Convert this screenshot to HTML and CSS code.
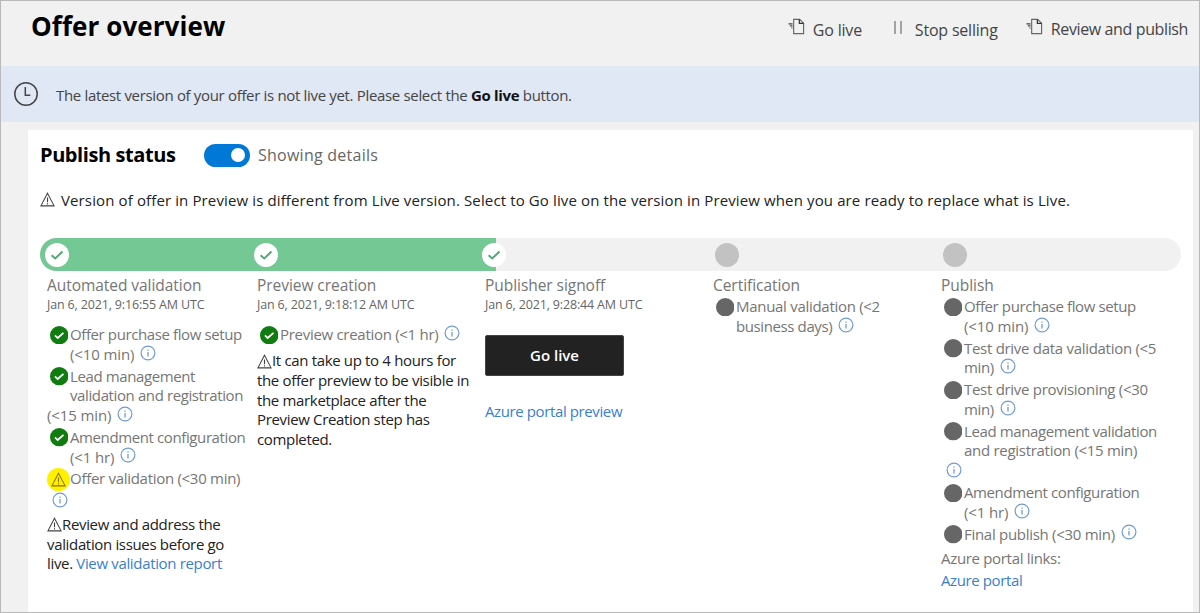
FILE: index.html
```html
<!DOCTYPE html>
<html lang="en">
<head>
<meta charset="utf-8">
<title>Offer overview</title>
<link rel="stylesheet" href="styles.css">
</head>
<body>
<svg class="defs" aria-hidden="true">
  <symbol id="ok" viewBox="0 0 18 18"><circle cx="9" cy="9" r="9" fill="#107c10"/><path d="M4.8 9.1l2.7 2.6 5.6-5" fill="none" stroke="#fff" stroke-width="1.7"/></symbol>
  <symbol id="dot" viewBox="0 0 18 18"><circle cx="9" cy="9" r="9" fill="#666"/></symbol>
  <symbol id="info" viewBox="0 0 16 16"><circle cx="8" cy="8" r="6.9" fill="none" stroke="#6f9bd8" stroke-width="1.2"/><path d="M8 7v4.6M8 4.4v1.4" stroke="#6f9bd8" stroke-width="1.3"/></symbol>
  <symbol id="warn" viewBox="0 0 16 16"><path d="M8 1.3L15 14.8H1z" fill="none" stroke="currentColor" stroke-width="1.1"/><path d="M8 5.8v5M8 12v1.4" stroke="currentColor" stroke-width="1.2"/></symbol>
  <symbol id="doc" viewBox="0 0 18 18"><path d="M6 1.5h6.3l4.2 4v11H6z" fill="none" stroke="#666" stroke-width="1.2"/><path d="M12 1.5v4.2h4.4" fill="none" stroke="#333" stroke-width="1.3"/><path d="M.5 6.2H4.8M2 8.4h2.8M3.5 10.6h1.3" stroke="#444" stroke-width="1.2"/></symbol>
  <symbol id="step" viewBox="0 0 24 24"><circle cx="12" cy="12" r="12" fill="#fff"/><path d="M6.6 12.2l3.6 3.3 7.3-7" fill="none" stroke="#52a975" stroke-width="2"/></symbol>
</svg>
<div class="page">
  <header class="header">
    <h1 class="title">Offer overview</h1>
    <nav class="actions">
      <a class="action golive"><svg class="doc"><use href="#doc"/></svg><span>Go live</span></a>
      <a class="action stop"><i class="pause"></i><span>Stop selling</span></a>
      <a class="action review"><svg class="doc"><use href="#doc"/></svg><span>Review and publish</span></a>
    </nav>
  </header>
  <div class="banner">
    <svg class="clock" viewBox="0 0 24 24"><circle cx="12" cy="12" r="11.2" fill="none" stroke="#444" stroke-width="1.5"/><path d="M11.3 5v8.2h5" fill="none" stroke="#444" stroke-width="1.5"/></svg>
    <p class="banner-text">The latest version of your offer is not live yet. Please select the <b>Go live</b> button.</p>
  </div>
  <main class="card">
    <div class="status">
      <h2 class="subtitle">Publish status</h2>
      <span class="toggle"><i class="knob"></i></span>
      <span class="toggle-label">Showing details</span>
    </div>
    <div class="notice"><svg class="warn"><use href="#warn"/></svg><span>Version of offer in Preview is different from Live version. Select to Go live on the version in Preview when you are ready to replace what is Live.</span></div>
    <div class="track">
      <div class="cell done"><svg class="step"><use href="#step"/></svg></div>
      <div class="cell done"><svg class="step"><use href="#step"/></svg></div>
      <div class="cell half"><svg class="step"><use href="#step"/></svg></div>
      <div class="cell"><i class="pending"></i></div>
      <div class="cell"><i class="pending"></i></div>
    </div>
    <div class="columns">
      <section class="col">
        <h3 class="name">Automated validation</h3>
        <p class="date">Jan 6, 2021, 9:16:55 AM UTC</p>
        <div class="item"><div class="line"><svg class="mark"><use href="#ok"/></svg><span>Offer purchase flow setup</span></div><div class="line in short"><span>(&lt;10 min)</span><svg class="info"><use href="#info"/></svg></div></div>
        <div class="item"><div class="line"><svg class="mark"><use href="#ok"/></svg><span>Lead management</span></div><div class="line in"><span>validation and registration</span></div><div class="line short"><span>(&lt;15 min)</span><svg class="info"><use href="#info"/></svg></div></div>
        <div class="item"><div class="line"><svg class="mark"><use href="#ok"/></svg><span>Amendment configuration</span></div><div class="line in short"><span>(&lt;1 hr)</span><svg class="info"><use href="#info"/></svg></div></div>
        <div class="item"><div class="line medium"><span class="alert"><svg class="warn"><use href="#warn"/></svg></span><span>Offer validation (&lt;30 min)</span></div><div class="line alone low"><svg class="info"><use href="#info"/></svg></div></div>
        <div class="note"><div class="line"><svg class="warn"><use href="#warn"/></svg><span>Review and address the</span></div><div class="line">validation issues before go</div><div class="line">live.&nbsp;<a class="link">View validation report</a></div></div>
      </section>
      <section class="col">
        <h3 class="name">Preview creation</h3>
        <p class="date">Jan 6, 2021, 9:18:12 AM UTC</p>
        <div class="item"><div class="line medium"><svg class="mark"><use href="#ok"/></svg><span>Preview creation (&lt;1 hr)</span><svg class="info"><use href="#info"/></svg></div></div>
        <div class="note preview-note"><div class="line"><svg class="warn"><use href="#warn"/></svg><span>It can take up to 4 hours for</span></div><div class="line">the offer preview to be visible in</div><div class="line">the marketplace after the</div><div class="line">Preview Creation step has</div><div class="line">completed.</div></div>
      </section>
      <section class="col">
        <h3 class="name">Publisher signoff</h3>
        <p class="date">Jan 6, 2021, 9:28:44 AM UTC</p>
        <button class="button">Go live</button>
        <div class="line"><a class="link">Azure portal preview</a></div>
      </section>
      <section class="col">
        <h3 class="name">Certification</h3>
        <div class="item"><div class="line medium"><svg class="mark"><use href="#dot"/></svg><span>Manual validation (&lt;2</span></div><div class="line in"><span>business days)</span><svg class="info"><use href="#info"/></svg></div></div>
      </section>
      <section class="col">
        <h3 class="name">Publish</h3>
        <div class="item"><div class="line"><svg class="mark"><use href="#dot"/></svg><span>Offer purchase flow setup</span></div><div class="line in short"><span>(&lt;10 min)</span><svg class="info"><use href="#info"/></svg></div></div>
        <div class="item"><div class="line medium"><svg class="mark"><use href="#dot"/></svg><span>Test drive data validation (&lt;5</span></div><div class="line in"><span>min)</span><svg class="info"><use href="#info"/></svg></div></div>
        <div class="item"><div class="line medium"><svg class="mark"><use href="#dot"/></svg><span>Test drive provisioning (&lt;30</span></div><div class="line in"><span>min)</span><svg class="info"><use href="#info"/></svg></div></div>
        <div class="item"><div class="line"><svg class="mark"><use href="#dot"/></svg><span>Lead management validation</span></div><div class="line in medium"><span>and registration (&lt;15 min)</span></div><div class="line alone"><svg class="info"><use href="#info"/></svg></div></div>
        <div class="item"><div class="line"><svg class="mark"><use href="#dot"/></svg><span>Amendment configuration</span></div><div class="line in short"><span>(&lt;1 hr)</span><svg class="info"><use href="#info"/></svg></div></div>
        <div class="item"><div class="line medium"><svg class="mark"><use href="#dot"/></svg><span>Final publish (&lt;30 min)</span><svg class="info"><use href="#info"/></svg></div></div>
        <div class="line links">Azure portal links:</div>
        <div class="line"><a class="link">Azure portal</a></div>
      </section>
    </div>
  </main>
</div>
</body>
</html>
```
FILE: styles.css
```css
* { box-sizing: border-box; margin: 0; padding: 0; }
body { font-family: "Open Sans", "Noto Sans", sans-serif; font-size: 15px; color: #222; background: #f1f1f1; }
svg { flex: none; }
.defs { display: none; }
.page { width: 1200px; height: 613px; border: 1px solid #b9b9b9; overflow: hidden; background: #f1f1f1; }

.header { height: 65px; display: flex; justify-content: space-between; padding: 0 11px 0 30px; }
.title { font-size: 26px; line-height: 36px; font-weight: 700; letter-spacing: 0.08px; color: #000; padding-top: 7px; }
.actions { display: flex; font-size: 16px; line-height: 22px; color: #444; white-space: nowrap; letter-spacing: -0.2px; }
.action { display: flex; }
.doc { width: 17px; height: 17px; margin-top: 17px; }
.action span { padding-top: 17px; }
.golive span { margin-left: 8px; width: 81px; }
.stop span { margin-left: 13px; width: 111px; }
.golive span, .stop span { padding-top: 18px; }
.review span { margin-left: 8px; letter-spacing: -0.38px; }
.pause { width: 8px; height: 13px; margin-top: 20px; border: solid #a3a3a3; border-width: 0 2px; }

.banner { height: 56px; background: #e0e7f5; display: flex; align-items: center; padding: 0 0 0 13px; }
.clock { width: 24px; height: 24px; }
.banner-text { margin-left: 18px; white-space: nowrap; color: #444; letter-spacing: -0.33px; padding-top: 2px; }
.banner-text b { color: #111; }

.card { width: 1165px; height: 482px; margin: 8px 0 0 27px; background: #fff; padding: 13px 12px 0; }
.status { display: flex; align-items: center; height: 24px; white-space: nowrap; }
.subtitle { font-size: 20px; line-height: 24px; width: 164px; color: #000; letter-spacing: -0.42px; }
.toggle { width: 46px; height: 23px; border-radius: 12px; background: #0078d7; display: flex; justify-content: flex-end; align-items: center; padding-right: 5px; }
.knob { width: 14px; height: 14px; border-radius: 50%; background: #fff; }
.toggle-label { font-size: 16px; margin-left: 8px; color: #666; letter-spacing: 0.25px; }
.notice { display: flex; align-items: center; height: 22px; margin: 22px 0 27px; white-space: nowrap; letter-spacing: 0.125px; }
.notice span { margin-left: 6px; }
.warn { width: 15px; height: 15px; }
.notice .warn { margin-top: -1px; }
.notice .warn, .note .warn { color: #444; }

.track { height: 33px; width: 1141px; border-radius: 17px; background: #f1f1f1; overflow: hidden; display: grid; grid-template-columns: 210px 228px 228px 228px 1fr; }
.cell { display: flex; align-items: center; padding-left: 5px; }
.cell + .cell { padding-left: 4px; }
.done { background: #74c893; }
.half { background: linear-gradient(90deg, #74c893 18px, #f1f1f1 18px); }
.step { width: 24px; height: 24px; }
.pending { width: 24px; height: 24px; border-radius: 50%; background: #c2c2c2; margin-left: 5px; }

.columns { display: grid; grid-template-columns: 210px 228px 228px 228px 1fr; margin: 3px 0 0 7px; color: #767676; white-space: nowrap; letter-spacing: -0.39px; }
.name { font-size: 15.5px; line-height: 22px; font-weight: 400; color: #767676; letter-spacing: -0.05px; }
.date { font-size: 12.5px; line-height: 18px; color: #666; margin-bottom: 11.3px; letter-spacing: -0.16px; }
.name + .item { margin-top: 1.2px; }
.item { margin-bottom: 2.2px; }
.line { display: flex; align-items: center; height: 19.65px; line-height: 19.65px; }
.in { padding-left: 23px; }
.medium { letter-spacing: -0.29px; }
.short { letter-spacing: -0.12px; }
.mark { width: 18.5px; height: 18.5px; margin: 0 2px 0 2.5px; }
.info { width: 16px; height: 16px; margin: -4px 0 0 6px; }
.alone { height: 20px; }
.alone .info { margin: -2px 0 0 5px; }
.low { height: 21px; }
.low .info { margin-top: 2px; }
.alert { width: 23px; height: 23px; border-radius: 50%; background: #fff100; display: flex; align-items: center; justify-content: center; color: #8a7500; flex: none; }
.note { color: #222; margin-top: 5px; letter-spacing: -0.34px; }
.preview-note { margin-top: 6.5px; }
.link { color: #3a7fcb; }
.button { display: block; width: 139px; height: 41px; margin: 21px 0 25.5px; padding-bottom: 1px; border: 1px solid #444; border-radius: 2px; background: #222; color: #fff; font: 600 15px "Open Sans", "Noto Sans", sans-serif; }
.links { margin: 4.5px 0 2.7px; letter-spacing: -0.32px; }
```
